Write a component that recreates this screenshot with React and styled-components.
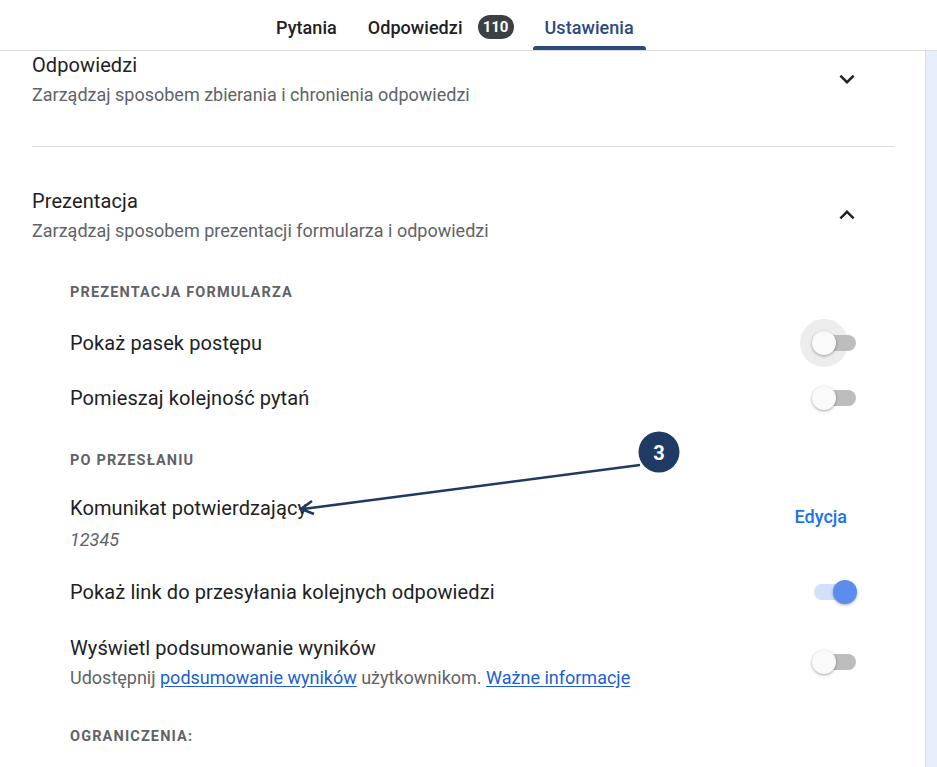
import React from "react";
import styled, { createGlobalStyle } from "styled-components";

const Global = createGlobalStyle`
  html, body { margin: 0; padding: 0; background: #fff; }
  body { font-family: Roboto, "Noto Sans", Arial, sans-serif; color: #202124; overflow: hidden; }
  * { box-sizing: border-box; }
`;

const Page = styled.div`
  position: relative;
  width: 937px;
  height: 767px;
  overflow: hidden;
  display: flex;
  flex-direction: column;
`;

const Header = styled.header`
  height: 51px;
  border-bottom: 1px solid #dadce0;
  display: flex;
  padding-left: 264px;
  gap: 7px;
`;

const Tab = styled.div`
  position: relative;
  display: flex;
  align-items: center;
  padding: 4px 12px 0;
  height: 50px;
  font-size: 18px;
  letter-spacing: 0.05px;
  font-weight: 500;
  color: ${(p) => (p.$active ? "#2b4a7e" : "#202124")};
  &::after {
    content: "";
    display: ${(p) => (p.$active ? "block" : "none")};
    position: absolute;
    left: 0;
    right: 0;
    bottom: 0;
    height: 4px;
    border-radius: 3px 3px 0 0;
    background: #2b4a7e;
  }
`;

const Badge = styled.span`
  margin-left: 15px;
  height: 24px;
  min-width: 36px;
  padding: 0 5px;
  border-radius: 12px;
  background: #3c4043;
  color: #fff;
  font-size: 15px;
  letter-spacing: 0;
  font-weight: 700;
  display: inline-flex;
  align-items: center;
  justify-content: center;
`;

const Body = styled.div`
  flex: 1;
  display: flex;
`;

const Main = styled.main`
  flex: 1;
  padding: 0 30px 0 32px;
`;

const Strip = styled.div`
  width: 12px;
  background: #e8eefc;
  border-left: 1px solid #dadce0;
`;

const SectionHead = styled.div`
  display: flex;
  align-items: center;
  justify-content: space-between;
  padding-top: ${(p) => p.$top || 0}px;
  padding-bottom: ${(p) => p.$bottom || 0}px;
  border-bottom: ${(p) => (p.$divider ? "1px solid #dadce0" : "none")};
`;

const HeadText = styled.div`
  display: flex;
  flex-direction: column;
  gap: 4px;
`;

const Title = styled.div`
  font-size: 20px;
  line-height: 28px;
  letter-spacing: 0.1px;
  color: #202124;
`;

const Sub = styled.div`
  font-size: 18px;
  line-height: 24px;
  color: #5f6368;
`;

const IconButton = styled.div`
  width: 48px;
  height: 48px;
  margin-right: 24px;
  display: flex;
  align-items: center;
  justify-content: center;
  color: #202124;
`;

const Items = styled.div`
  padding: 0 38px 0 38px;
`;

const Label = styled.div`
  font-size: 14.5px;
  line-height: 20px;
  font-weight: 700;
  letter-spacing: 1.15px;
  color: #5f6368;
  text-transform: uppercase;
  margin-top: ${(p) => p.$top || 0}px;
`;

const Row = styled.div`
  display: flex;
  align-items: center;
  justify-content: space-between;
  min-height: ${(p) => p.$h || 0}px;
  margin-top: ${(p) => p.$top || 0}px;
`;

const RowText = styled.div`
  display: flex;
  flex-direction: column;
  gap: ${(p) => p.$gap || 4}px;
`;

const Value = styled(Sub)`
  font-style: italic;
`;

const Link = styled.a`
  color: #1b5fd1;
  text-decoration: underline;
  text-underline-offset: 2px;
`;

const TextButton = styled.div`
  align-self: flex-start;
  margin-top: 8px;
  padding: 0 10px;
  height: 28px;
  display: flex;
  align-items: center;
  font-size: 18px;
  font-weight: 500;
  color: #1a73e8;
`;

const Toggle = styled.div`
  position: relative;
  width: 45px;
  height: 24px;
  flex-shrink: 0;
`;

const Track = styled.div`
  position: absolute;
  left: 2px;
  right: 1px;
  top: 4px;
  height: 16px;
  border-radius: 8px;
  background: ${(p) => (p.$on ? "#d2e0fb" : "#bdbdbd")};
`;

const Halo = styled.div`
  position: absolute;
  left: -12px;
  top: -12px;
  width: 48px;
  height: 48px;
  border-radius: 50%;
  background: #ededed;
`;

const Thumb = styled.div`
  position: absolute;
  top: 0;
  left: ${(p) => (p.$on ? "21px" : "0px")};
  width: 24px;
  height: 24px;
  border-radius: 50%;
  background: ${(p) => (p.$on ? "#5b8def" : "#fafafa")};
  box-shadow: 0 1px 3px rgba(0, 0, 0, 0.35);
`;

const Overlay = styled.svg`
  position: absolute;
  left: 0;
  top: 0;
  pointer-events: none;
`;

function Switch({ on, halo }) {
  return (
    <Toggle>
      {halo && <Halo />}
      <Track $on={on} />
      <Thumb $on={on} />
    </Toggle>
  );
}

function Chevron({ up }) {
  return (
    <svg width="30" height="30" viewBox="0 0 24 24" fill="currentColor">
      {up ? (
        <path d="M7.41 15.41L12 10.83l4.59 4.58L18 14l-6-6-6 6z" />
      ) : (
        <path d="M16.59 8.59L12 13.17 7.41 8.59 6 10l6 6 6-6z" />
      )}
    </svg>
  );
}

export default function App() {
  return (
    <Page>
      <Global />
      <Header>
        <Tab>Pytania</Tab>
        <Tab>
          Odpowiedzi<Badge>110</Badge>
        </Tab>
        <Tab $active>Ustawienia</Tab>
      </Header>
      <Body>
        <Main>
          <SectionHead $bottom={39} $divider>
            <HeadText>
              <Title>Odpowiedzi</Title>
              <Sub>Zarządzaj sposobem zbierania i chronienia odpowiedzi</Sub>
            </HeadText>
            <IconButton>
              <Chevron />
            </IconButton>
          </SectionHead>
          <SectionHead $top={40}>
            <HeadText>
              <Title>Prezentacja</Title>
              <Sub>Zarządzaj sposobem prezentacji formularza i odpowiedzi</Sub>
            </HeadText>
            <IconButton>
              <Chevron up />
            </IconButton>
          </SectionHead>
          <Items>
            <Label $top={40}>Prezentacja formularza</Label>
            <Row $h={55} $top={12}>
              <Title>Pokaż pasek postępu</Title>
              <Switch halo />
            </Row>
            <Row $h={55}>
              <Title>Pomieszaj kolejność pytań</Title>
              <Switch />
            </Row>
            <Label $top={26}>Po przesłaniu</Label>
            <Row $top={23}>
              <RowText $gap={6}>
                <Title>Komunikat potwierdzający</Title>
                <Value>12345</Value>
              </RowText>
              <TextButton>Edycja</TextButton>
            </Row>
            <Row $h={56} $top={12}>
              <Title>Pokaż link do przesyłania kolejnych odpowiedzi</Title>
              <Switch on />
            </Row>
            <Row $top={14}>
              <RowText>
                <Title>Wyświetl podsumowanie wyników</Title>
                <Sub>
                  Udostępnij <Link>podsumowanie wyników</Link> użytkownikom.{" "}
                  <Link>Ważne informacje</Link>
                </Sub>
              </RowText>
              <Switch />
            </Row>
            <Label $top={37}>Ograniczenia:</Label>
          </Items>
        </Main>
        <Strip />
      </Body>
      <Overlay width="937" height="767" viewBox="0 0 937 767">
        <line x1="640" y1="465" x2="303" y2="509" stroke="#1f3a63" strokeWidth="2.6" />
        <path d="M312 501 L301 509 L314 514" fill="none" stroke="#1f3a63" strokeWidth="2.6" strokeLinejoin="miter" />
        <circle cx="659" cy="452" r="20.5" fill="#1f3a63" />
        <text x="659" y="459.5" textAnchor="middle" fill="#fff" fontFamily="Roboto, Arial, sans-serif" fontWeight="700" fontSize="20">3</text>
      </Overlay>
    </Page>
  );
}
